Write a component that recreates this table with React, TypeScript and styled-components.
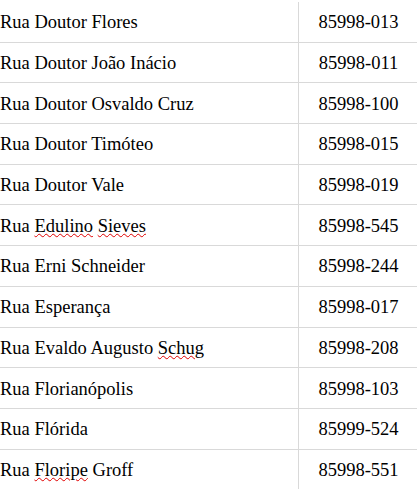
import React from "react";
import styled, { createGlobalStyle } from "styled-components";

const Global = createGlobalStyle`
  html, body { margin: 0; padding: 0; background: #ffffff; }
  body { font-family: "Liberation Serif", "Times New Roman", serif; color: #000; }
`;

const Table = styled.div`
  width: 417px;
  padding-top: 2px;
  display: flex;
  flex-direction: column;
  font-family: "Liberation Serif", "Times New Roman", serif;
`;

const Row = styled.div`
  display: grid;
  grid-template-columns: 298px 1fr;
  height: 40.7px;
  box-sizing: border-box;
  border-bottom: 1px solid #d9d9d9;
`;

const Cell = styled.div<{ $num?: boolean }>`
  display: flex;
  align-items: center;
  justify-content: ${(p) => (p.$num ? "center" : "flex-start")};
  padding: 2px 0 0 ${(p) => (p.$num ? "1px" : "0")};
  box-sizing: border-box;
  font-size: 18.5px;
  color: #000;
  border-left: ${(p) => (p.$num ? "1px solid #d9d9d9" : "none")};
`;

const Text = styled.span`
  white-space: pre;
`;

const Misspelled = styled.span`
  text-decoration-line: underline;
  text-decoration-style: wavy;
  text-decoration-color: #e00000;
  text-decoration-thickness: 1px;
  text-underline-offset: 1px;
`;

type Part = string | { bad: string };

const rows: { name: Part[]; cep: string }[] = [
  { name: ["Rua Doutor Flores"], cep: "85998-013" },
  { name: ["Rua Doutor João Inácio"], cep: "85998-011" },
  { name: ["Rua Doutor Osvaldo Cruz"], cep: "85998-100" },
  { name: ["Rua Doutor Timóteo"], cep: "85998-015" },
  { name: ["Rua Doutor Vale"], cep: "85998-019" },
  { name: ["Rua ", { bad: "Edulino" }, " ", { bad: "Sieves" }], cep: "85998-545" },
  { name: ["Rua Erni Schneider"], cep: "85998-244" },
  { name: ["Rua Esperança"], cep: "85998-017" },
  { name: ["Rua Evaldo Augusto ", { bad: "Schug" }], cep: "85998-208" },
  { name: ["Rua Florianópolis"], cep: "85998-103" },
  { name: ["Rua Flórida"], cep: "85999-524" },
  { name: ["Rua ", { bad: "Floripe" }, " Groff"], cep: "85998-551" },
];

export default function App() {
  return (
    <>
      <Global />
      <Table>
        {rows.map((r, i) => (
          <Row key={i}>
            <Cell>
              <Text>
                {r.name.map((p, j) =>
                  typeof p === "string" ? (
                    <React.Fragment key={j}>{p}</React.Fragment>
                  ) : (
                    <Misspelled key={j}>{p.bad}</Misspelled>
                  )
                )}
              </Text>
            </Cell>
            <Cell $num>
              <Text>{r.cep}</Text>
            </Cell>
          </Row>
        ))}
      </Table>
    </>
  );
}
